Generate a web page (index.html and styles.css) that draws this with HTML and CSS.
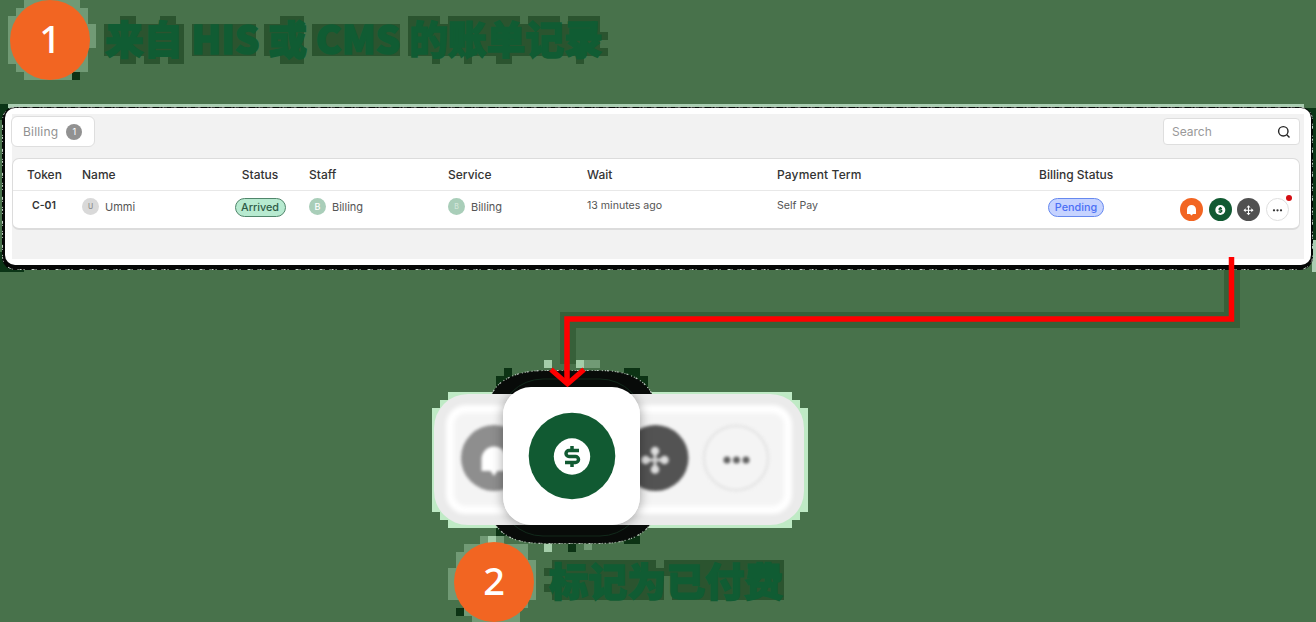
FILE: index.html
```html
<!DOCTYPE html>
<html lang="zh-CN">
<head>
<meta charset="utf-8">
<title>Billing</title>
<link rel="stylesheet" href="styles.css">
</head>
<body>
<main class="page">
  <svg class="backdrop" viewBox="0 0 1316 622" aria-hidden="true" shape-rendering="crispEdges">
    <!-- halos around the step circles -->
    <path fill="#719a75" d="M24 0H80V8H88V24H96V48H88V72H72V80H24V72H16V64H8V16H16V8H24Z"/>
    <path fill="#0c3314" d="M72 72h8v8h-8zM456 608h8v8h-8z"/>
    <path fill="#719a75" d="M480 536H504V544H528V560H536V600H528V608H520V622H472V616H464V600H448V568H456V552H464V544H480Z"/>
    <!-- shade behind the headings -->
    <path fill="#2b542f" d="M104 24h16v-8h16v8h24v-8h16v8h8v40h-16v-8h-8v8h-16v-8h-8v8h-16v-8h-16zM192 24h64v32h-64zM264 24h16v-8h24v48h-24v-8h-16zM312 24h88v32h-88zM408 16h32v8h8v-8h72v8h8v-8h32v8h8v-8h32v16h8v8h-8v8h8v8h-24v8h-8v-8h-64v8h-16v-8h-24v8h-8v-8h-24v8h-8v-8h-24z"/>
    <path fill="#2b542f" d="M552 560H656V568H664V560H784V600H672V576H664V600H552V592H544V584H552V576H544V568H552Z"/>
    <!-- connector shade -->
    <path fill="#376039" d="M1224 268h16v60H576v36h-16v-52h664z"/>
    <!-- panel shade -->
    <path fill="#0b3516" d="M0 252H24V272H0ZM1292 108h24v132h-24ZM0 104h24v16H0Z"/>
    <path fill="#a9cdb1" d="M8 104H1304V108H8ZM1312 264h4v8h-4zM1312 240h4v24h-4z"/>
    <g shape-rendering="auto">
      <rect x="2" y="107" width="1311" height="163" rx="13" fill="#050706"/>
      <rect x="2.5" y="107" width="1310" height="162.5" rx="13" fill="none" stroke="#c4d0c6" stroke-dasharray="1 2 2 1 1 5 1 1 3 7" stroke-width="1"/>
    </g>
    <!-- toolbar callout halo -->
    <path fill="#bfeac5" d="M448 392H792V400H800V408H808V512H800V520H792V528H448V520H440V512H432V408H440V400H448Z"/>
    <path fill="#a4cda9" d="M544 360h8v8h-8zM576 360h8v8h-8zM544 544h8v8h-8zM488 536h8v8h-8z"/>
    <path fill="#719a75" d="M584 360h16v8h-16zM584 544h8v6h-8z"/>
    <path fill="#0c3314" d="M504 368h8v8h-8zM624 368h16v8h8v16h-24zM496 376h16v16h-16zM496 528h16v8h-16zM568 544h8v8h-8zM624 536h16v8h-16z"/>
    <g shape-rendering="auto">
      <path id="shadow" d="M491 396C498 378 520 370.500 545 370.500H600C625 370.500 645 378 653 396V520C645 536 625 543.500 600 543.500H545C520 543.500 504 538 495 524Z" fill="#080b09" stroke="#b9c4bb" stroke-width="1.200" stroke-dasharray="1 2 1 1 2 3"/>
      <rect x="499" y="379" width="145" height="157" rx="44" fill="none" stroke="#12291b" stroke-width="1"/>
    </g>
  </svg>

  <header class="step step-one">
    <span class="step-number">1</span>
    <h1 class="step-title">来自 HIS 或 CMS 的账单记录</h1>
  </header>

  <section class="panel">
    <div class="panel-body">
      <div class="toolbar">
        <div class="tab">Billing <span class="tab-count">1</span></div>
        <div class="search"><span>Search</span>
          <svg width="14" height="14" viewBox="0 0 14 14" fill="none" stroke="#252525" stroke-width="1.400"><circle cx="6.300" cy="6.300" r="4.700"/><path d="M9.800 9.800l2.700 2.700"/></svg>
        </div>
      </div>
      <div class="table">
        <div class="row head">
          <span>Token</span><span>Name</span><span class="center">Status</span><span>Staff</span><span>Service</span><span>Wait</span><span class="term">Payment Term</span><span>Billing Status</span>
        </div>
        <div class="row record">
          <span class="token">C-01</span>
          <span class="person"><i class="avatar grey">U</i>Ummi</span>
          <span class="center"><b class="pill arrived">Arrived</b></span>
          <span class="person"><i class="avatar">B</i>Billing</span>
          <span class="person"><i class="avatar faint">B</i>Billing</span>
          <span class="plain">13 minutes ago</span>
          <span class="plain">Self Pay</span>
          <span class="bill-status"><b class="pill pending">Pending</b></span>
          <span class="actions">
            <svg width="23" height="23" viewBox="0 0 23 23"><circle cx="11.500" cy="11.500" r="11.500" fill="#f26522"/><path fill="#fff" d="M7 16v-4.500a4.500 4.500 0 0 1 9 0V16h-3l-1.500 1.500L10 16z"/></svg>
            <svg width="23" height="23" viewBox="0 0 23 23"><circle cx="11.500" cy="11.500" r="11.500" fill="#115a32"/><circle cx="11.300" cy="12" r="5" fill="#fff"/><path d="M13 10.300h-2.300a.9.900 0 0 0 0 1.700h1.200a.9.900 0 0 1 0 1.800H9.500M11.300 9v1.200m0 3.600V15" fill="none" stroke="#115a32" stroke-width="1.300"/></svg>
            <svg width="23" height="23" viewBox="0 0 23 23"><circle cx="11.500" cy="11.500" r="11.500" fill="#505050"/><path d="M7.500 12.300h8M11.500 8.300v8" stroke="#fff" stroke-width="1"/><path fill="#fff" d="M6.500 12.300l2.200-2v4zM16.500 12.300l-2.200-2v4zM11.500 7.300l-2 2.200h4zM11.500 17.300l-2-2.200h4z"/></svg>
            <span class="more"><svg width="23" height="23" viewBox="0 0 23 23"><circle cx="11.500" cy="11.500" r="11" fill="#fff" stroke="#dedede"/><g fill="#333"><circle cx="8" cy="12.300" r="1.150"/><circle cx="11.500" cy="12.300" r="1.150"/><circle cx="15" cy="12.300" r="1.150"/></g></svg><i class="alert"></i></span>
          </span>
        </div>
      </div>
    </div>
  </section>

  <section class="callout">
    <div class="strip">
      <svg class="strip-icons" width="370" height="131" viewBox="0 0 370 131">
        <circle cx="60" cy="64" r="33" fill="#8e8e8e"/>
        <path fill="#fff" d="M47.500 77V65a12.500 12.500 0 0 1 25 0v12h-9l-3.500 5-3.500-5z"/>
        <circle cx="221.500" cy="64" r="33" fill="#535353"/>
        <path d="M212 66h18M221 57v19" stroke="#d5d5d5" stroke-width="3"/>
        <g fill="#dedede"><circle cx="211.500" cy="66" r="4.300"/><circle cx="230.500" cy="66" r="4.300"/><circle cx="221" cy="57" r="4.300"/><circle cx="221" cy="75.500" r="4.300"/></g>
        <circle cx="302" cy="64" r="32" fill="#f4f4f4" stroke="#e7e7e7" stroke-width="3"/>
        <g fill="#606060"><circle cx="293" cy="66" r="3.500"/><circle cx="302.500" cy="66" r="3.500"/><circle cx="312" cy="66" r="3.500"/></g>
      </svg>
    </div>
    <div class="pay-card">
      <svg width="88" height="88" viewBox="0 0 88 88"><circle cx="44" cy="44" r="43.300" fill="#115a32"/><circle cx="44" cy="44.500" r="18.200" fill="#fff"/><path d="M51 38.500H41a3 3 0 0 0-3 3v0a3 3 0 0 0 3 3h6.500a3 3 0 0 1 3 3v0a3 3 0 0 1-3 3H37M44 34v4.500M44 50.500v4.500" fill="none" stroke="#115a32" stroke-width="3.500"/></svg>
    </div>
  </section>

  <footer class="step step-two">
    <span class="step-number">2</span>
    <h2 class="step-title">标记为已付费</h2>
  </footer>

  <svg class="connector" viewBox="0 0 1316 622" aria-hidden="true">
    <path d="M1231.500 257V319H567V382" fill="none" stroke="#f00" stroke-width="5.500"/>
    <path d="M551 369.500L567.500 384L584 369.500" fill="none" stroke="#f00" stroke-width="5"/>
  </svg>
</main>
</body>
</html>
```
FILE: styles.css
```css
* { box-sizing: border-box; }
body { margin: 0; background: #48724b; font-family: Inter, "Noto Sans", sans-serif; color: #333; }
.page { position: relative; width: 1316px; height: 622px; overflow: hidden; display: flex; flex-direction: column; }
.backdrop, .connector { position: absolute; inset: 0; width: 1316px; height: 622px; pointer-events: none; }
.page > header, .page > section, .page > footer { position: relative; flex: none; }

.step { display: flex; align-items: flex-start; height: 80px; }
.step-one { padding-left: 10px; gap: 15px; }
.step-two { padding-left: 454px; gap: 15px; margin-top: 17px; }
.step-number { flex: none; width: 80px; height: 80px; border-radius: 50%; background: #f26522; color: #fff; font: 500 38px/77px "Noto Sans", sans-serif; text-align: center; }
.step-title { margin: 0; color: #105c33; font: 900 38.700px/74px "Noto Sans CJK SC", sans-serif; white-space: nowrap; -webkit-text-stroke: 1.500px #105c33; }
.step-two .step-title { font-size: 39px; }

.panel { margin: 28px 0 0 5px; width: 1306px; height: 157px; padding: 6px 7px; background: #fff; border-radius: 10px; }
.panel-body { height: 145px; background: #f2f2f2; }
.toolbar { display: flex; justify-content: space-between; align-items: flex-start; height: 44px; padding: 2px 4px 0 0; }
.tab { display: flex; align-items: center; gap: 8px; width: 84px; height: 31px; padding-left: 11px; margin-left: -1px; border: 1px solid #dedede; border-radius: 6px; background: #fff; color: #919191; font-size: 12px; letter-spacing: .2px; }
.tab-count { width: 16px; height: 16px; border-radius: 50%; background: #919191; color: #fff; font-size: 9px; line-height: 16px; text-align: center; }
.search { display: flex; align-items: center; justify-content: space-between; width: 137px; height: 27px; margin-top: 2px; padding: 0 8px; border: 1px solid #dedede; border-radius: 4px; background: #fff; color: #999; font-size: 12px; }
.table { width: 1288px; height: 72px; border: 1px solid #dcdcdc; border-bottom-width: 2px; border-radius: 7px; background: #fff; }
.row { display: grid; grid-template-columns: 69px 141px 86px 139px 139px 190px 262px 128px 1fr; font-size: 11px; white-space: nowrap; }
.head { height: 32px; padding-bottom: 1px; border-bottom: 1px solid #e8e8e8; align-items: center; font-size: 12px; font-weight: 500; }
.head > :first-child { padding-left: 14px; }
.term { letter-spacing: .15px; }
.record { height: 37px; padding-top: 6px; color: #555; }
.center { text-align: center; padding-right: 12px; }
.token { padding: 2px 0 0 19px; font-weight: 600; font-size: 10.500px; color: #333; }
.person { display: flex; align-items: center; gap: 6px; height: 19px; }
.avatar { width: 17px; height: 17px; border-radius: 50%; background: #a9ceb9; color: #fff; font: 500 9px/17px Inter, sans-serif; text-align: center; }
.avatar.grey { background: #d9d9d9; color: #888; font-size: 7px; }
.avatar.faint { color: #d3e6da; font-size: 7px; }
.pill { display: inline-block; height: 19px; margin-top: 1px; border-radius: 10px; font-size: 10.800px; font-weight: 500; line-height: 17px; text-align: center; }
.arrived { width: 51px; border: 1px solid #50866b; background: #b7ead0; color: #2e5b46; }
.pending { width: 56px; border: 1px solid #6689ef; background: #c6d3ff; color: #4b6ff5; }
.bill-status { padding-left: 9px; }
.plain { padding-top: 2px; font-size: 10.600px; }
.actions { display: flex; gap: 5.700px; padding: 1px 0 0 13px; }
.actions svg { display: block; }
.more { position: relative; height: 23px; }
.alert { position: absolute; top: -3px; right: -3px; width: 6px; height: 6px; border-radius: 50%; background: #d40d12; }

.callout { height: 138px; margin: 122px 0 0 434px; width: 371px; padding-top: 7px; }
.strip { position: relative; height: 131px; width: 370px; overflow: hidden; border-radius: 34px; background: #ebebeb; }
.strip::before { content: ""; position: absolute; inset: 15px 16px; border: 8px solid #fff; margin: -4px; border-radius: 20px; background: #f4f4f4; filter: blur(2px); }
.strip-icons { position: relative; display: block; filter: blur(1.600px); }
.strip::after { content: ""; position: absolute; left: 69px; top: -7px; width: 137px; height: 138px; border-radius: 28px; box-shadow: 0 1px 12px rgba(0,0,0,.35); }
.pay-card { position: absolute; top: 0; left: 69px; width: 137px; height: 138px; border-radius: 28px; background: #fff; display: grid; place-items: center; }
```
